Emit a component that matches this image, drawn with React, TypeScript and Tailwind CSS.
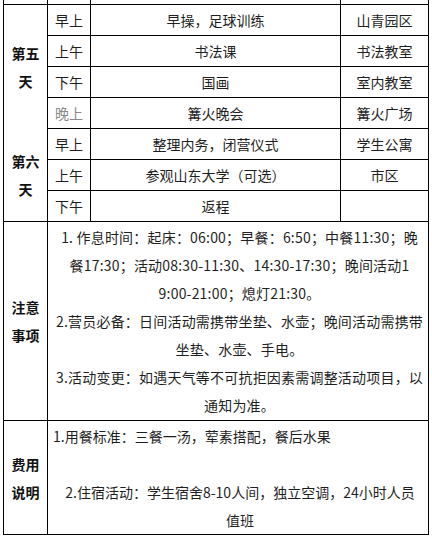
const font = { fontFamily: '"Noto Sans CJK SC", "Microsoft YaHei", sans-serif' };

const cell = "border-l border-t border-black flex items-center justify-center text-[14px] text-[#1f1f1f]";

type Row = { time: string; what: string; where: string; dim?: boolean };

const day5: Row[] = [
  { time: "早上", what: "早操，足球训练", where: "山青园区" },
  { time: "上午", what: "书法课", where: "书法教室" },
  { time: "下午", what: "国画", where: "室内教室" },
  { time: "晚上", what: "篝火晚会", where: "篝火广场", dim: true },
];

const day6: Row[] = [
  { time: "早上", what: "整理内务，闭营仪式", where: "学生公寓" },
  { time: "上午", what: "参观山东大学（可选）", where: "市区" },
  { time: "下午", what: "返程", where: "" },
];

function Label({ lines, noTop, span }: { lines: string[]; noTop?: boolean; span: string }) {
  return (
    <div
      className={`${span} border-l border-black ${noTop ? "" : "border-t"} flex flex-col items-center justify-center text-[14px] font-bold text-[#111] leading-[28px]`}
    >
      {lines.map((l) => (
        <div key={l}>{l}</div>
      ))}
    </div>
  );
}

function Slot({ r }: { r: Row }) {
  return (
    <>
      <div className={`${cell} ${r.dim ? "!text-[#8a8a8a]" : ""}`}>{r.time}</div>
      <div className={cell}>{r.what}</div>
      <div className={cell}>{r.where}</div>
    </>
  );
}

export default function App() {
  return (
    <div className="bg-white w-[432px] h-[540px]" style={font}>
      <div className="ml-[3px] w-fit grid grid-cols-[44px_43px_250px_88px] grid-rows-[4px_repeat(7,31px)_199px_114px] border-r border-b border-black">
        <div className="border-l border-black" />
        <div className="border-l border-black" />
        <div className="border-l border-black" />
        <div className="border-l border-black" />

        <Label span="row-span-4" lines={["第五", "天"]} />
        {day5.map((r, i) => (
          <Slot key={i} r={r} />
        ))}

        <Label span="row-span-3" noTop lines={["第六", "天"]} />
        {day6.map((r, i) => (
          <Slot key={i} r={r} />
        ))}

        <Label span="" lines={["注意", "事项"]} />
        <div className="col-span-3 border-l border-t border-black flex flex-col justify-center text-center text-[14px] text-[#1f1f1f] leading-[28px] pl-[4px] pr-[1px] whitespace-nowrap tracking-[0.2px]">
          <div>1. 作息时间：起床：06:00；早餐：6:50；中餐11:30；晚</div>
          <div>餐17:30；活动08:30-11:30、14:30-17:30；晚间活动1</div>
          <div>9:00-21:00；熄灯21:30。</div>
          <div>2.营员必备：日间活动需携带坐垫、水壶；晚间活动需携带</div>
          <div>坐垫、水壶、手电。</div>
          <div>3.活动变更：如遇天气等不可抗拒因素需调整活动项目，以</div>
          <div>通知为准。</div>
        </div>

        <Label span="" lines={["费用", "说明"]} />
        <div className="col-span-3 border-l border-t border-black flex flex-col justify-center text-[14px] text-[#1f1f1f] leading-[28px] pl-[5px] pr-[1px] whitespace-nowrap">
          <div className="text-left">1.用餐标准：三餐一汤，荤素搭配，餐后水果</div>
          <div className="h-[28px]" />
          <div className="text-center">2.住宿活动：学生宿舍8-10人间，独立空调，24小时人员</div>
          <div className="text-center">值班</div>
        </div>
      </div>
    </div>
  );
}
